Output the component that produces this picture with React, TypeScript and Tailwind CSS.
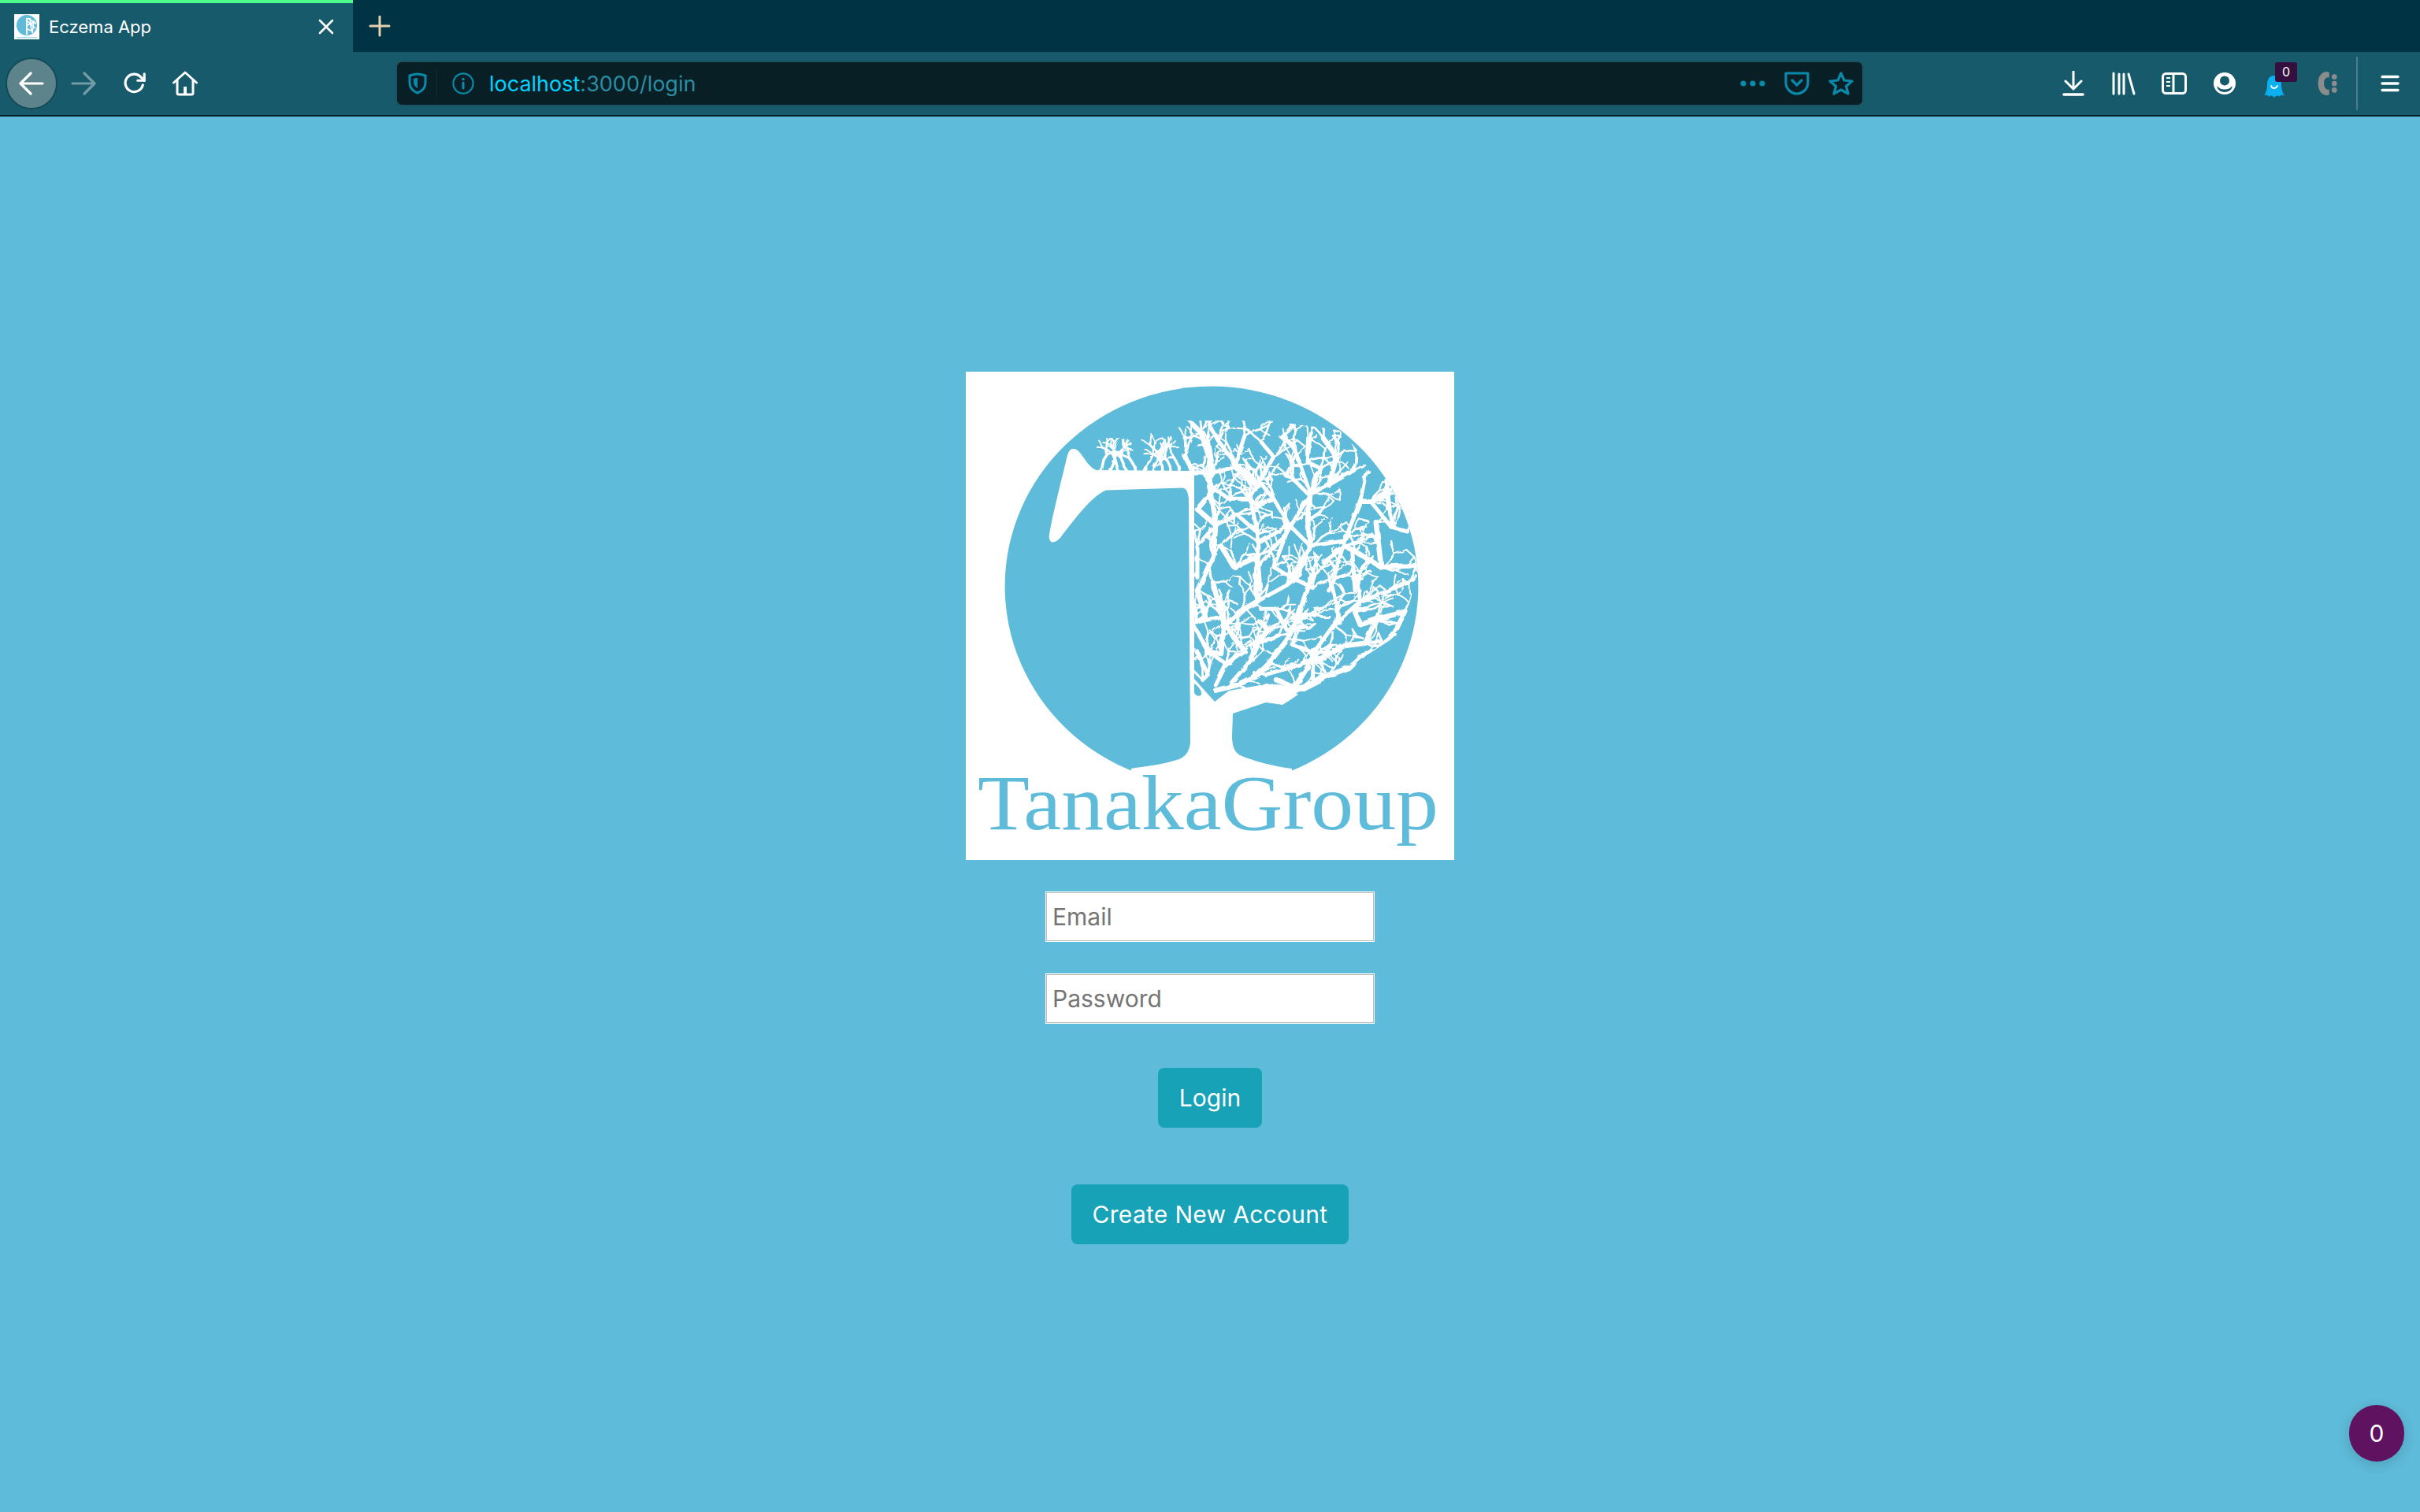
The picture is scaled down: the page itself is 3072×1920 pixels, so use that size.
type Pt = [number, number]

// traced from the logo, numbers are crop pixels (3x), converted in toPage
const upper: Pt[][] = [
  [[60, 690], [120, 560], [130, 440], [110, 320], [110, 200], [75, 90], [40, 55]],
  [[300, 690], [290, 560], [290, 470], [260, 340], [290, 290], [200, 200], [140, 120], [105, 60]],
  [[290, 600], [400, 470], [490, 320], [430, 150], [385, 100]],
  [[420, 640], [490, 520], [480, 420], [490, 320], [570, 280], [655, 230]],
  [[490, 520], [620, 500], [680, 350], [700, 250]],
  [[490, 520], [410, 440], [350, 340], [300, 280]],
  [[540, 580], [620, 520], [660, 540], [760, 600], [890, 595]],
  [[350, 340], [280, 360], [260, 340], [180, 340], [120, 300]],
  [[410, 440], [290, 510]],
  [[560, 290], [590, 180], [540, 110]],
  [[480, 320], [420, 260], [395, 250]],
  [[490, 320], [530, 225], [480, 200], [490, 90]],
  [[680, 350], [720, 350], [770, 320]],
  [[720, 350], [800, 450], [860, 465]],
  [[800, 450], [780, 270]],
  [[760, 600], [740, 430]],
  [[650, 540], [660, 690]],
  [[30, 240], [120, 240], [200, 220], [240, 100]],
  [[40, 230], [10, 175]],
  [[120, 240], [100, 120]],
  [[200, 220], [290, 290], [350, 180], [300, 120]],
  [[130, 440], [60, 380], [110, 320]],
  [[130, 440], [60, 520], [60, 640]],
  [[290, 470], [210, 400], [130, 440]],
  [[290, 560], [200, 600], [150, 520]],
  [[620, 500], [580, 640], [560, 690]],
  [[400, 470], [350, 600], [420, 640], [500, 680]],
]

const lower: Pt[][] = [
  [[130, 440], [210, 420], [290, 380], [330, 340], [400, 250], [440, 170], [480, 50], [500, 0]],
  [[320, 380], [440, 345], [500, 320], [490, 290], [420, 265]],
  [[500, 400], [500, 300], [580, 190], [670, 110], [760, 70], [860, 30]],
  [[510, 330], [620, 270], [700, 260], [740, 170], [850, 140]],
  [[510, 400], [640, 350], [700, 300]],
  [[130, 420], [170, 340], [100, 290], [50, 200]],
  [[170, 340], [240, 290], [200, 240], [170, 190], [220, 140], [290, 100], [280, 0]],
  [[190, 410], [260, 330], [290, 260], [370, 230]],
  [[290, 100], [400, 40], [450, 0]],
  [[100, 290], [150, 300], [160, 190], [120, 30]],
  [[60, 180], [150, 160]],
  [[300, 130], [360, 130], [400, 210]],
  [[300, 180], [330, 210], [280, 270]],
  [[600, 180], [590, 120], [570, 30]],
  [[680, 110], [670, 0]],
  [[740, 170], [680, 190], [660, 140], [700, 130]],
  [[420, 165], [470, 150]],
  [[60, 290], [100, 380], [80, 400]],
  [[360, 400], [430, 430], [480, 350]],
  [[385, 485], [440, 445], [560, 385], [640, 355], [700, 295], [740, 290], [805, 228], [850, 140]],
  [[280, 440], [340, 420], [440, 440]],
  [[60, 60], [90, 160], [60, 180]],
]

const toPage = (pts: Pt[], top: number): Pt[] => pts.map(([x, y]) => [1500 + x / 3, top + y / 3])
const mains = [...upper.map((s) => toPage(s, 520)), ...lower.map((s) => toPage(s, 730))]

const asPoints = (pts: Pt[]) => pts.map((p) => `${p[0].toFixed(1)},${p[1].toFixed(1)}`).join(' ')

function buildTwigs() {
  let seed = 41
  const rand = () => {
    seed = (seed * 16807) % 2147483647
    return seed / 2147483647
  }
  const twigs: { pts: Pt[]; w: number }[] = []
  const ends: Pt[] = []
  const grow = (x: number, y: number, angle: number, len: number, depth: number) => {
    const pts: Pt[] = [[x, y]]
    let a = angle
    let cx = x
    let cy = y
    for (let i = 0; i < 3; i++) {
      a += (rand() - 0.5) * 0.7
      cx += (Math.cos(a) * len) / 3
      cy += (Math.sin(a) * len) / 3
      pts.push([cx, cy])
    }
    twigs.push({ pts, w: 1.9 + depth * 0.8 })
    ends.push([cx, cy])
    if (depth > 0) {
      grow(cx, cy, a - 0.35 - rand() * 0.4, len * 0.72, depth - 1)
      grow(cx, cy, a + 0.35 + rand() * 0.4, len * 0.72, depth - 1)
    }
  }
  // fine branches hanging off the traced ones, fanning out from the trunk
  mains.forEach((stroke) => {
    stroke.slice(1).forEach(([x, y]) => {
      const out = Math.atan2(y - 900, x - 1530)
      grow(x, y, out + (rand() - 0.5) * 1.5, 18 + rand() * 10, 1)
      grow(x, y, out + (rand() - 0.5) * 2.2, 14 + rand() * 10, 1)
    })
  })
  // low bushy part above the arm
  for (let x = 1398; x < 1506; x += 11) {
    grow(x, 599, -Math.PI / 2 + (rand() - 0.5) * 0.7, 18 + rand() * 6, 2)
  }
  // join some tips to their neighbour so the crown closes into a net
  ends.forEach((e, i) => {
    if (i % 2) return
    let best: Pt | null = null
    let dist = 26
    ends.forEach((o, j) => {
      const d = Math.hypot(o[0] - e[0], o[1] - e[1])
      if (j !== i && d > 7 && d < dist) {
        dist = d
        best = o
      }
    })
    if (best && e[0] > 1510) twigs.push({ pts: [e, best], w: 2.2 })
  })
  return twigs
}

const twigs = buildTwigs()

function Logo() {
  return (
    <svg viewBox="1226 472 620 620" className="block w-[620px] h-[620px] bg-white">
      <defs>
        <filter id="rough" x="-5%" y="-5%" width="110%" height="110%">
          <feTurbulence type="fractalNoise" baseFrequency="0.09" numOctaves="2" seed="4" />
          <feDisplacementMap in="SourceGraphic" scale="4" />
        </filter>
        <clipPath id="disc">
          <ellipse cx="1538" cy="744.6" rx="262.4" ry="254" />
        </clipPath>
        <clipPath id="crown">
          <polygon points="1392,600 1392,556 1440,556 1500,534 1610,534 1700,546 1722,570 1738,598 1762,604 1790,650 1802,720 1786,778 1772,808 1735,832 1714,852 1688,862 1648,882 1628,895 1607,892 1565,908 1510,908 1510,620 1500,600" />
        </clipPath>
      </defs>
      <g clipPath="url(#disc)">
        <rect x="1270" y="480" width="540" height="520" fill="#5ebbd9" />
      </g>
      <path
        d="M1362,570 C1372,568 1378,592 1392,597 L1516,598 L1516,862 L1542,891 L1560,877 L1600,870 L1632,872 L1648,882 L1628,895 L1607,892 L1565,906 L1564,934 C1564,946 1566,954 1574,959 C1590,966 1620,974 1640,976 L1640,1000 L1436,1000 L1436,976 C1455,973 1480,970 1497,964 C1505,960 1510,955 1511,942 L1509,636 C1509,626 1506,620 1501,619.6 L1404,622.6 C1385,630 1360,665 1347,681.5 C1342,688 1334,692 1332,684 C1330,678 1350,600 1354,582 C1356,574 1358,570 1362,570 Z"
        fill="#fff"
      />
      <g clipPath="url(#disc)">
        <g clipPath="url(#crown)">
          <g filter="url(#rough)" fill="none" stroke="#fff" strokeLinecap="round" strokeLinejoin="round">
            {mains.map((s, i) => (
              <polyline key={i} points={asPoints(s)} strokeWidth={i % 3 === 0 ? 6.5 : 5} />
            ))}
            {twigs.map((t, i) => (
              <polyline key={i} points={asPoints(t.pts)} strokeWidth={t.w} />
            ))}
          </g>
        </g>
      </g>
      <path d="M1516,868 C1522,872 1526,878 1525,882 C1523,885 1518,884 1516,880 Z" fill="#5ebbd9" />
      <text
        x="1241"
        y="1053"
        textLength="585"
        lengthAdjust="spacingAndGlyphs"
        fill="#5ebbd9"
        className="font-['Liberation_Serif',serif] text-[100px]"
      >
        TanakaGroup
      </text>
    </svg>
  )
}

function Favicon() {
  return (
    <svg viewBox="0 0 32 32" className="w-[32px] h-[32px] bg-white shrink-0">
      <circle cx="16" cy="14" r="13" fill="#5ebbd9" />
      <rect x="15" y="5" width="2" height="21" fill="#fff" />
      <path d="M17 5 L28 12 M17 9 L27 18 M17 14 L25 10 M17 19 L24 22 M20 5 L22 22 M25 8 L23 24" stroke="#fff" strokeWidth="1.6" />
      <rect x="3" y="29" width="26" height="1.5" fill="#a8dcec" />
    </svg>
  )
}

function Chrome() {
  return (
    <div className="shrink-0">
      {/* tab strip */}
      <div className="h-[66px] bg-[#003445] flex items-stretch">
        <div className="w-[448px] bg-[#175a6b] border-t-4 border-[#4dfa8c] flex items-center pl-[18px] pr-[24px] pb-[2px]">
          <Favicon />
          <span className="ml-[12px] flex-1 text-white text-[22px] font-['Inter',sans-serif]">Eczema App</span>
          <svg viewBox="0 0 20 20" className="w-[20px] h-[20px]" fill="none" stroke="#fff" strokeWidth="2.6" strokeLinecap="round">
            <path d="M2 2 L18 18 M18 2 L2 18" />
          </svg>
        </div>
        <div className="w-[68px] flex items-center justify-center">
          <svg viewBox="0 0 28 28" className="w-[28px] h-[28px]" fill="none" stroke="#e6d0b0" strokeWidth="3" strokeLinecap="round">
            <path d="M14 2 V26 M2 14 H26" />
          </svg>
        </div>
      </div>
      {/* toolbar */}
      <div className="h-[82px] bg-[#175a6b] border-b-2 border-[#05232c] flex items-center">
        <div className="ml-[7px] w-[66px] h-[66px] rounded-full bg-[#5d838b] border-2 border-[#134a58] flex items-center justify-center">
          <svg viewBox="0 0 32 32" className="w-[32px] h-[32px]" fill="none" stroke="#fff" strokeWidth="3.2" strokeLinecap="round" strokeLinejoin="round">
            <path d="M2 16 H30 M15 3 L2 16 L15 29" />
          </svg>
        </div>
        <div className="w-[66px] flex justify-center">
          <svg viewBox="0 0 32 32" className="w-[32px] h-[32px] opacity-40" fill="none" stroke="#fff" strokeWidth="3.2" strokeLinecap="round" strokeLinejoin="round">
            <path d="M2 16 H30 M17 3 L30 16 L17 29" />
          </svg>
        </div>
        <div className="w-[64px] flex justify-center">
          <svg viewBox="0 0 32 32" className="w-[30px] h-[30px]" fill="none" stroke="#fff" strokeWidth="3.4" strokeLinecap="round" strokeLinejoin="round">
            <path d="M27 18 A12 12 0 1 1 24 7 L29 12" />
            <path d="M29 3 V12 H20" />
          </svg>
        </div>
        <div className="w-[63px] flex justify-center">
          <svg viewBox="0 0 32 32" className="w-[32px] h-[32px]" fill="none" stroke="#fff" strokeWidth="3" strokeLinecap="round" strokeLinejoin="round">
            <path d="M1.5 15 L16 2 L30.5 15" />
            <path d="M6 12 V28 Q6 30 8 30 H24 Q26 30 26 28 V12" />
            <rect x="14" y="20" width="4" height="9" fill="#fff" stroke="none" />
          </svg>
        </div>
        {/* url bar */}
        <div className="ml-[236px] w-[1864px] h-[58px] rounded-[8px] bg-[#081f26] border-2 border-[#1f5363] flex items-center">
          <svg viewBox="0 0 24 28" className="ml-[14px] w-[24px] h-[28px] shrink-0" fill="none" stroke="#0a89ab" strokeWidth="3">
            <path d="M12 2 C16 2 19 3 22 4 V13 C22 20 17 24 12 26 C7 24 2 20 2 13 V4 C5 3 8 2 12 2 Z" />
            <path d="M12 7 C10 7 8 7.5 7 8 V13 C7 16 9 18.5 12 20 Z" fill="#0a89ab" stroke="none" />
          </svg>
          <div className="ml-[12px] w-[1px] h-[40px] bg-[#0d2b33]" />
          <svg viewBox="0 0 28 28" className="ml-[19px] w-[28px] h-[28px] shrink-0" fill="none" stroke="#0a89ab" strokeWidth="2.2" strokeLinecap="round">
            <circle cx="14" cy="14" r="12.6" />
            <path d="M14 13 V20" strokeWidth="3" />
            <circle cx="14" cy="8.5" r="1.8" fill="#0a89ab" stroke="none" />
          </svg>
          <span className="ml-[19px] mt-[2px] text-[27px] font-['Inter',sans-serif] text-[#2b8da3]">
            <span className="text-[#00d4ff]">localhost</span>:3000/login
          </span>
          <div className="flex-1" />
          <svg viewBox="0 0 32 8" className="w-[32px] h-[8px] shrink-0" fill="#0a89ab">
            <circle cx="4" cy="4" r="3.6" />
            <circle cx="16" cy="4" r="3.6" />
            <circle cx="28" cy="4" r="3.6" />
          </svg>
          <svg viewBox="0 0 32 30" className="ml-[24px] w-[32px] h-[30px] shrink-0" fill="none" stroke="#0a89ab" strokeWidth="3.2" strokeLinecap="round" strokeLinejoin="round">
            <path d="M2 2 H30 V14 C30 22 23 28 16 28 C9 28 2 22 2 14 Z" />
            <path d="M10 11 L16 17 L22 11" />
          </svg>
          <svg viewBox="0 0 32 32" className="ml-[24px] w-[32px] h-[32px] shrink-0" fill="none" stroke="#0a89ab" strokeWidth="3.2" strokeLinejoin="round">
            <path d="M16 3 L20 12 L30 13 L22.5 19.5 L25 29 L16 24 L7 29 L9.5 19.5 L2 13 L12 12 Z" />
          </svg>
          <div className="w-[11px] shrink-0" />
        </div>
        {/* extensions */}
        <div className="ml-[234px] w-[64px] flex justify-center">
          <svg viewBox="0 0 30 32" className="w-[30px] h-[32px]" fill="none" stroke="#fff" strokeWidth="3" strokeLinecap="round" strokeLinejoin="round">
            <path d="M15 1 V22 M5 13 L15 23 L25 13" />
            <path d="M3 30 H27" strokeWidth="3.6" />
          </svg>
        </div>
        <div className="w-[64px] flex justify-center">
          <svg viewBox="0 0 30 30" className="w-[30px] h-[30px]" fill="none" stroke="#fff" strokeWidth="3" strokeLinecap="round">
            <path d="M2 2 V28 M9 3 V28 M15 3 V28 M21 3 L28 28" />
          </svg>
        </div>
        <div className="w-[64px] flex justify-center">
          <svg viewBox="0 0 32 28" className="w-[32px] h-[28px]" fill="none" stroke="#fff" strokeWidth="3">
            <rect x="1.5" y="1.5" width="29" height="25" rx="4" />
            <path d="M15 2 V26" />
            <path d="M6 7 H11 M6 12 H11 M6 17 H11" strokeWidth="2.2" />
          </svg>
        </div>
        <div className="w-[64px] flex justify-center">
          <svg viewBox="0 0 28 28" className="w-[28px] h-[28px]">
            <circle cx="14" cy="14" r="14" fill="#fff" />
            <circle cx="14" cy="10.5" r="6" fill="#175a6b" />
            <path d="M4.5 17 C8 23 20 23 23.5 17 C24 21 20 25 14 25 C8 25 4 21 4.5 17 Z" fill="#175a6b" />
          </svg>
        </div>
        <div className="relative w-[64px] flex justify-center">
          <svg viewBox="0 0 26 30" className="w-[26px] h-[30px] mt-[8px] -ml-[2px]">
            <path d="M13 1 C20 1 22 7 22 13 C22 19 24 24 26 26 C23 26 21 25 20 28 C18 26 16 26 13 29 C10 26 8 26 6 28 C5 25 3 26 0 26 C2 24 4 19 4 13 C4 7 6 1 13 1 Z" fill="#0ab0f0" />
            <path d="M9 14 C10 18 15 18 17 14" fill="none" stroke="#fff" strokeWidth="1.8" strokeLinecap="round" />
          </svg>
          <div className="absolute left-[32px] -top-[8px] w-[28px] h-[25px] rounded-[3px] bg-[#35103f] text-white text-[16px] leading-[25px] text-center font-['Inter',sans-serif]">
            0
          </div>
        </div>
        <div className="w-[64px] flex justify-center">
          <svg viewBox="0 0 32 32" className="w-[30px] h-[32px]" fill="#8c8c8c">
            <path d="M18 0 C12 0 6 5 6 16 C6 27 12 32 18 32 C19 32 20 31.5 21 31 V24 C17 25 14 22 14 16 C14 10 17 7 21 8 V1 C20 0.5 19 0 18 0 Z" />
            <circle cx="28" cy="7" r="3.6" />
            <circle cx="28" cy="16" r="3.6" />
            <circle cx="28" cy="25" r="3.6" />
          </svg>
        </div>
        <div className="ml-[7px] w-[2px] h-[68px] bg-[#4a7c88]" />
        <div className="ml-[9px] w-[64px] flex justify-center">
          <svg viewBox="0 0 24 22" className="w-[24px] h-[22px]" fill="none" stroke="#fff" strokeWidth="3.4" strokeLinecap="round">
            <path d="M2 2.5 H22 M2 11 H22 M2 19.5 H22" />
          </svg>
        </div>
      </div>
    </div>
  )
}

export default function App() {
  return (
    <div className="relative h-[1920px] w-[3072px] overflow-hidden flex flex-col bg-[#5ebbd9] font-['Inter',sans-serif]">
      <Chrome />
      <main className="flex flex-col items-center pt-[324px]">
        <Logo />
        <input
          placeholder="Email"
          className="mt-[40px] w-[418px] h-[64px] px-[8px] bg-white border border-white shadow-[inset_0_0_0_1px_#bdbdbd] text-[30px] placeholder:text-[#757575]"
        />
        <input
          placeholder="Password"
          className="mt-[40px] w-[418px] h-[64px] px-[8px] bg-white border border-white shadow-[inset_0_0_0_1px_#bdbdbd] text-[30px] placeholder:text-[#757575]"
        />
        <button className="mt-[56px] w-[132px] h-[76px] rounded-[8px] bg-[#17a2b8] text-white text-[30px]">Login</button>
        <button className="mt-[72px] w-[352px] h-[76px] rounded-[8px] bg-[#17a2b8] text-white text-[30px] tracking-[0.3px]">
          Create New Account
        </button>
      </main>
      <div className="absolute left-[2982px] top-[1784px] w-[70px] h-[72px] rounded-full bg-[#5f1260] text-white text-[30px] flex items-center justify-center shadow-[0_4px_16px_rgba(0,0,0,0.15)]">
        0
      </div>
    </div>
  )
}
